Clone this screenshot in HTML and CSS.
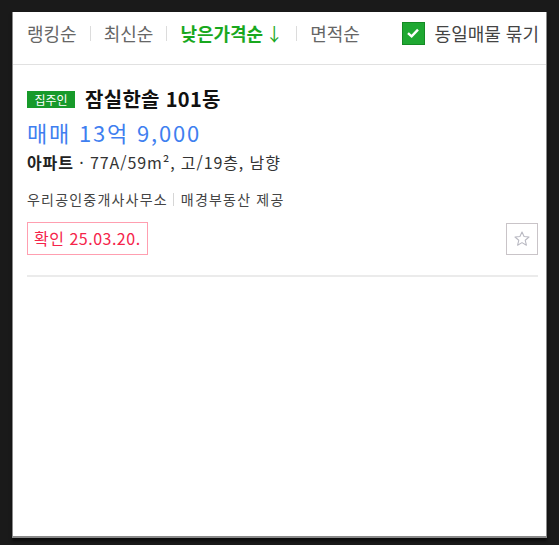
FILE: index.html
```html
<!DOCTYPE html>
<html lang="ko">
<head>
    <meta charset="UTF-8">
    <meta name="viewport" content="width=device-width, initial-scale=1.0">
    <title>매물 목록</title>
    <link rel="stylesheet" href="styles.css">
</head>
<body>
    <div class="panel">
        <div class="sort-bar">
            <ul class="sort-list">
                <li>랭킹순</li>
                <li class="sep"></li>
                <li>최신순</li>
                <li class="sep"></li>
                <li class="active">낮은가격순<span class="arrow">↓</span></li>
                <li class="sep"></li>
                <li>면적순</li>
            </ul>
            <label class="group-check">
                <span class="checkbox">
                    <svg width="14" height="12" viewBox="0 0 14 12"><path d="M2 6.2 L5.6 9.4 L12 2.6" fill="none" stroke="#fff" stroke-width="2.4"/></svg>
                </span>
                동일매물 묶기
            </label>
        </div>

        <div class="item">
            <div class="item-title">
                <span class="owner-badge">집주인</span>
                <span class="name">잠실한솔 101동</span>
            </div>
            <div class="price">매매 13억 9,000</div>
            <div class="spec"><strong>아파트</strong> · 77A/59m², 고/19층, 남향</div>
            <div class="agent">우리공인중개사사무소<span class="bar"></span>매경부동산 제공</div>
            <div class="item-bottom">
                <span class="confirm">확인 25.03.20.</span>
                <button class="star-btn" aria-label="관심">
                    <svg width="18" height="18" viewBox="0 0 20 20"><path d="M10 2.2 L12.3 7.3 L17.8 7.8 L13.6 11.4 L14.9 16.9 L10 14 L5.1 16.9 L6.4 11.4 L2.2 7.8 L7.7 7.3 Z" fill="none" stroke="#b9b9c2" stroke-width="1.2" stroke-linejoin="round"/></svg>
                </button>
            </div>
        </div>
    </div>
</body>
</html>
```
FILE: styles.css
```css
body {
    margin: 0;
    padding: 12px;
    background-color: #1a1a1a;
    font-family: "Noto Sans CJK KR", "Noto Sans", sans-serif;
    color: #222;
}

.panel {
    background-color: #ffffff;
    height: 526px;
    width: 535px;
    box-sizing: border-box;
    border-left: 1px solid #8a8a8a;
    border-right: 1px solid #8a8a8a;
    border-bottom: 2px solid #8a8a8a;
    box-shadow: 0 3px 3px rgba(0, 0, 0, 0.6);
}

.sort-bar {
    display: flex;
    align-items: center;
    justify-content: space-between;
    height: 53px;
    padding: 0 7px 10px 14px;
    box-sizing: border-box;
    border-bottom: 1px solid #e1e1e1;
}

.sort-list {
    display: flex;
    align-items: center;
    gap: 13px;
    list-style: none;
    margin: 0;
    padding: 0;
    font-size: 18px;
    line-height: 22px;
    color: #666;
}

.sort-list .sep {
    width: 1px;
    height: 15px;
    background-color: #dcdcdc;
}

.sort-list .active {
    color: #19a81e;
    font-weight: bold;
}

.sort-list .arrow {
    font-weight: normal;
    margin-left: 2px;
}

.group-check {
    display: flex;
    align-items: center;
    gap: 10px;
    font-size: 18px;
    color: #444;
}

.checkbox {
    display: flex;
    align-items: center;
    justify-content: center;
    width: 23px;
    height: 23px;
    background-color: #1fa832;
    border: 1px solid #158a24;
    box-sizing: border-box;
}

.item {
    margin: 0 8px 0 14px;
    padding-top: 22px;
    padding-bottom: 20px;
    border-bottom: 2px solid #ebebeb;
}

.item-title {
    display: flex;
    align-items: center;
    gap: 10px;
}

.owner-badge {
    display: inline-block;
    width: 48px;
    height: 17px;
    line-height: 17px;
    text-align: center;
    background-color: #179a2a;
    color: #fff;
    font-size: 12px;
}

.name {
    font-size: 20px;
    font-weight: bold;
    line-height: 24px;
    letter-spacing: 0.3px;
    color: #111;
}

.price {
    margin-top: 8px;
    font-size: 22px;
    line-height: 26px;
    letter-spacing: 1.8px;
    color: #3f7ff0;
}

.spec {
    margin-top: 7px;
    font-size: 16px;
    line-height: 20px;
    letter-spacing: 0.9px;
    color: #333;
}

.spec strong {
    color: #222;
}

.agent {
    margin-top: 18px;
    font-size: 14px;
    line-height: 18px;
    letter-spacing: 1.2px;
    color: #444;
}

.agent .bar {
    display: inline-block;
    width: 1px;
    height: 13px;
    margin: 0 7px 0 5px;
    vertical-align: -1px;
    background-color: #d6d6d6;
}

.item-bottom {
    display: flex;
    align-items: center;
    justify-content: space-between;
    margin-top: 14px;
}

.confirm {
    display: inline-block;
    height: 33px;
    line-height: 31px;
    padding: 0 6px;
    box-sizing: border-box;
    border: 1px solid #ff9fb0;
    color: #f5244a;
    font-size: 16px;
    letter-spacing: 0.5px;
}

.star-btn {
    display: flex;
    align-items: center;
    justify-content: center;
    width: 32px;
    height: 32px;
    padding: 0;
    background-color: #fff;
    border: 1px solid #c9c4c8;
}
```
